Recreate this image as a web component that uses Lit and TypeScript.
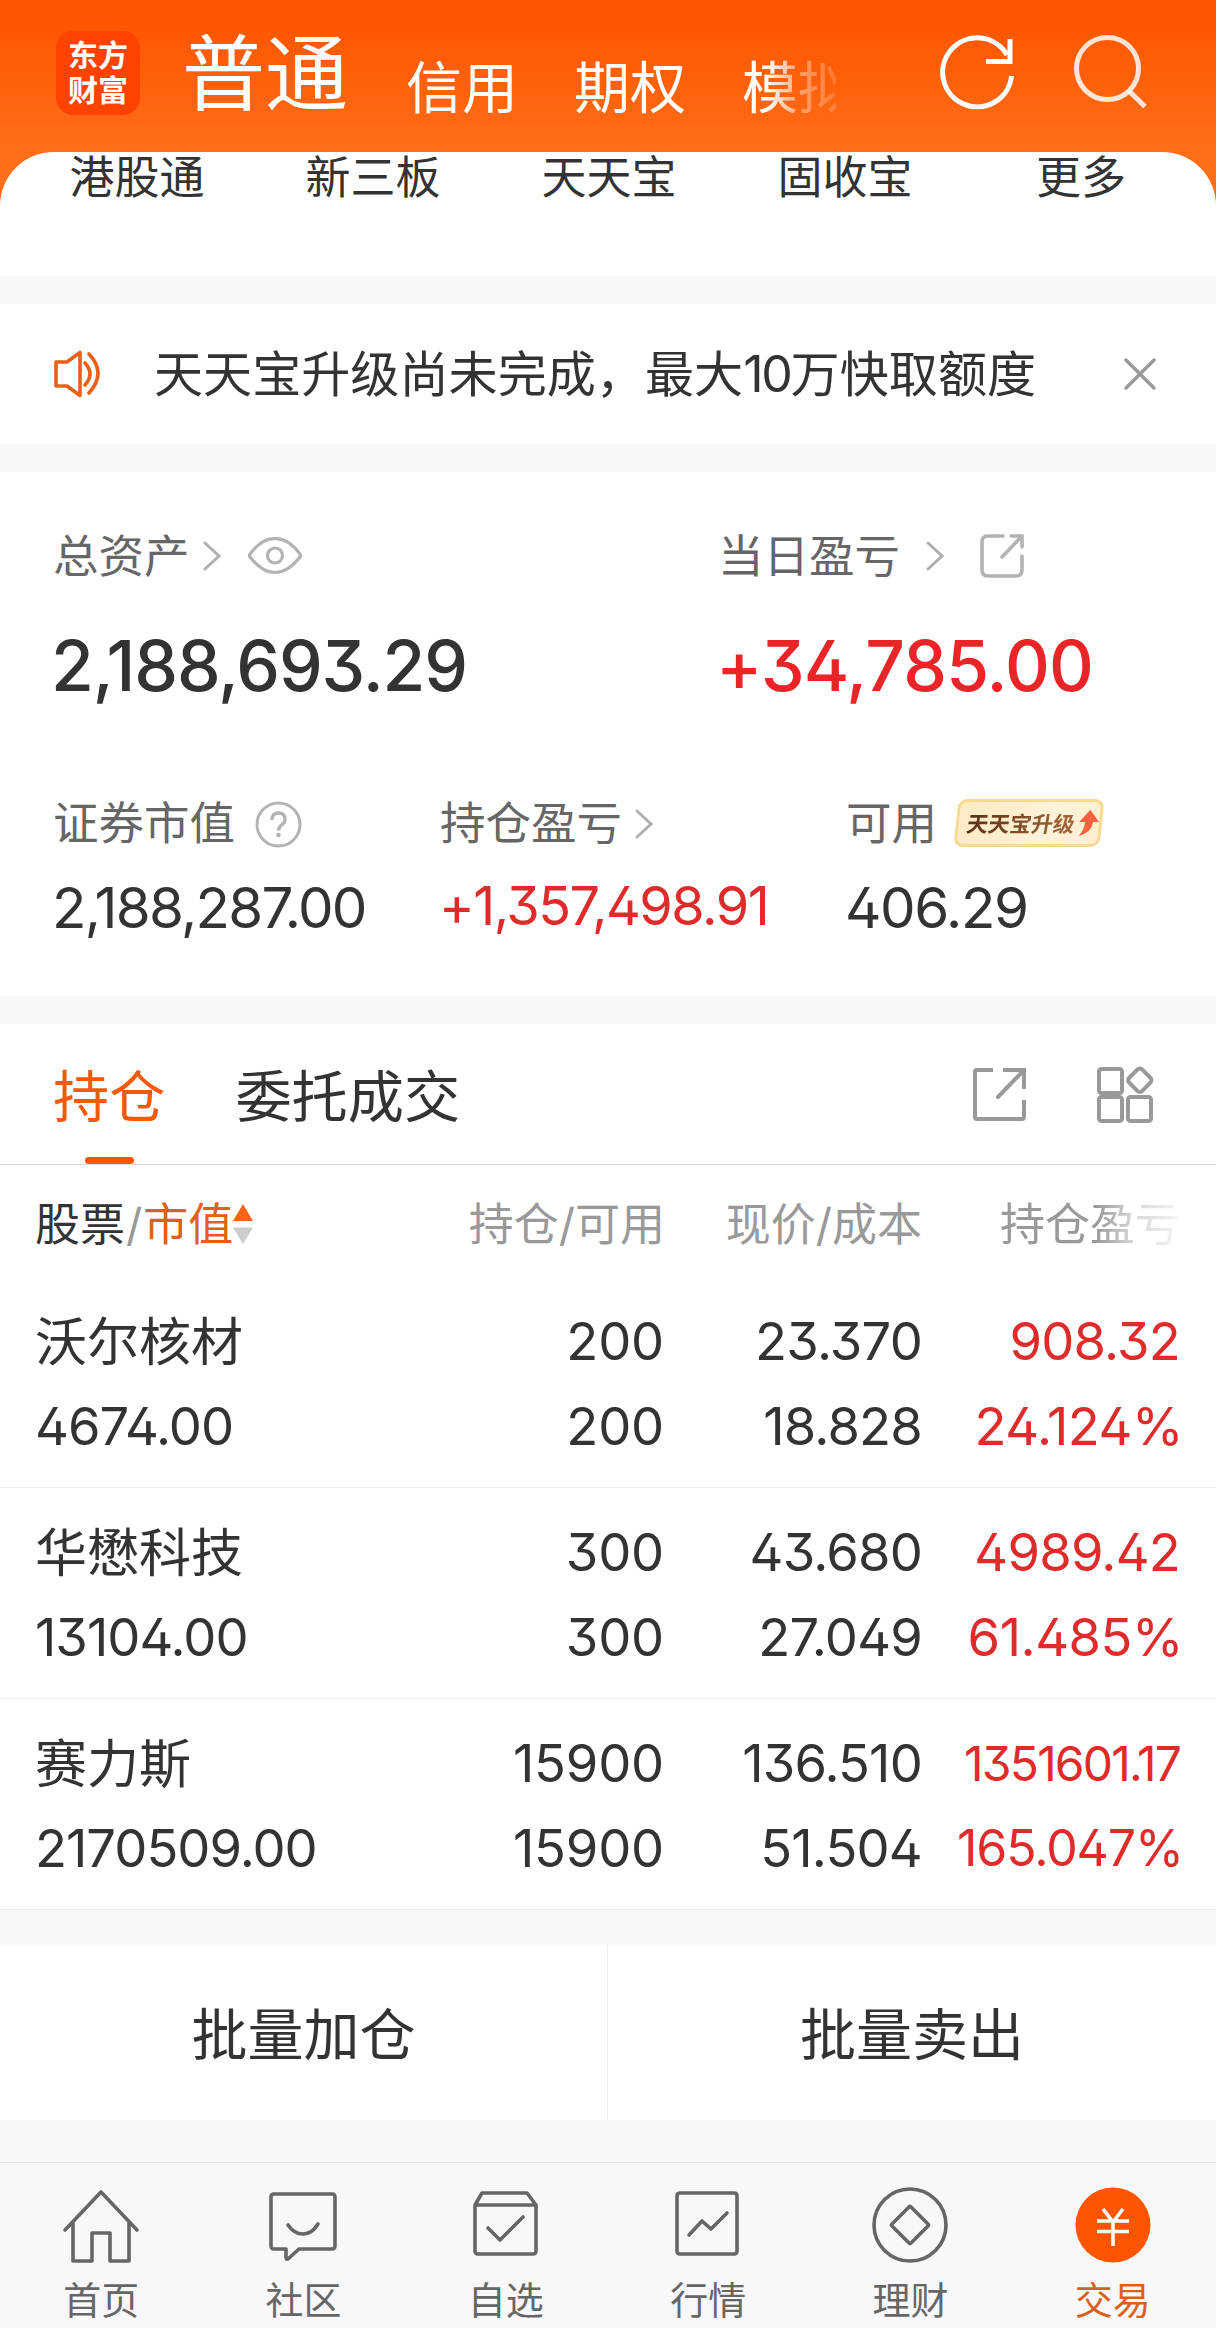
import { LitElement, html, css, svg } from "lit";
import { customElement } from "lit/decorators.js";
import { classMap } from "lit/directives/class-map.js";

interface Holding {
  name: string;
  value: string;
  held: string;
  available: string;
  price: string;
  cost: string;
  profit: string;
  rate: string;
  compact?: boolean;
}

const HOLDINGS: Holding[] = [
  { name: "沃尔核材", value: "4674.00", held: "200", available: "200", price: "23.370", cost: "18.828", profit: "908.32", rate: "24.124%" },
  { name: "华懋科技", value: "13104.00", held: "300", available: "300", price: "43.680", cost: "27.049", profit: "4989.42", rate: "61.485%" },
  { name: "赛力斯", value: "2170509.00", held: "15900", available: "15900", price: "136.510", cost: "51.504", profit: "1351601.17", rate: "165.047%", compact: true },
];

const chevron = html`<svg class="chevron" width="18" height="30" viewBox="0 0 18 30">
  <path d="M2 2 L16 15 L2 28" fill="none" stroke="#b0b0b0" stroke-width="3" stroke-linecap="round" />
</svg>`;

const NAV = [
  {
    label: "首页",
    icon: svg`<path d="M3 43 L39 5 L75 43 M11 36 V74 H30 V46 H48 V74 H67 V36" />`,
  },
  {
    label: "社区",
    icon: svg`<path d="M10 7 H68 Q71 7 71 10 V59 Q71 62 68 62 H35 L24 72 Q22 73 22 70 V62 H10 Q7 62 7 59 V10 Q7 7 10 7 Z M24 38 Q30 47 39 47 Q48 47 54 37" />`,
  },
  {
    label: "自选",
    icon: svg`<path d="M15 6 H60 L69 18 V64 Q69 67 66 67 H11 Q8 67 8 64 V18 Z M8 18 H69 M21 41 L33 53 L56 30" />`,
  },
  {
    label: "行情",
    icon: svg`<path d="M11 6 H65 Q68 6 68 9 V64 Q68 67 65 67 H11 Q8 67 8 64 V9 Q8 6 11 6 Z M20 48 L33 34 L42 42 L58 26" />`,
  },
  {
    label: "理财",
    icon: svg`<circle cx="39" cy="38" r="36" /><path d="M38 20 Q39 19 40 20 L57 37 Q58 38 57 39 L40 56 Q39 57 38 56 L21 39 Q20 38 21 37 Z" />`,
  },
  {
    label: "交易",
    active: true,
    icon: svg`<circle cx="39" cy="38" r="37.5" fill="#ff5500" stroke="none" /><path stroke="#fff" stroke-linecap="butt" d="M29 22 L39 35 L49 22 M23 34 H55 M23 44.5 H55 M39 34 V59" />`,
  },
];

@customElement("app-root")
export class AppRoot extends LitElement {
  static styles = css`
    :host {
      display: block;
      width: 1216px;
      height: 2328px;
      overflow: hidden;
      background: #f7f8fa;
      color: #333;
      font-family: "Inter", "Noto Sans CJK SC", sans-serif;
      font-feature-settings: "cv02", "cv09", "calt" 0;
      white-space: nowrap;
    }
    * { box-sizing: border-box; }
    svg { display: block; flex: none; }

    .top { background: linear-gradient(#ff5400 0, #ff5500 20px, #ff6e16 150px, #ff7018 206px); }
    .header { height: 152px; display: flex; align-items: flex-start; padding-left: 56px; color: #fff; }
    .logo {
      width: 84px; height: 84px; margin-top: 31px; border-radius: 17px; background: #ff4200;
      font: 700 30px/35px "Noto Sans CJK SC", sans-serif; text-align: center; padding-top: 5px; flex: none;
    }
    .accounts { display: flex; width: 654px; margin-left: 42px; line-height: 84px; font-size: 56px;
      -webkit-mask-image: linear-gradient(90deg, #000 585px, rgba(0,0,0,.4) 618px, rgba(0,0,0,.15) 654px);
      mask-image: linear-gradient(90deg, #000 585px, rgba(0,0,0,.4) 618px, rgba(0,0,0,.15) 654px);
      overflow: hidden; height: 152px; }
    .accounts .main { font-size: 83px; margin-top: 32px; width: 166px; margin-right: 58px; }
    .accounts .alt { margin-top: 46px; width: 112px; margin-right: 56px; flex: none; }
    .accounts .alt:last-child { margin-right: 0; }
    .refresh { margin: 34px 0 0 102px; }
    .search { margin: 34px 0 0 57px; }

    .sheet { height: 124px; background: #fff; border-radius: 54px 54px 0 0; padding: 1px 18px 0 19px; }
    .shortcuts { display: grid; grid-template-columns: repeat(5, 236px); font-size: 45px; line-height: 49px; text-align: center; }

    .notice { height: 140px; margin-top: 28px; background: #fff; display: flex; align-items: center; padding: 0 59px 0 53px; font-size: 49.1px; line-height: 60px; }
    .notice .msg { flex: 1; margin-left: 53px; }
    .notice .num { font-size: 50px; letter-spacing: -2.2px; }

    .assets { height: 524px; margin-top: 28px; background: #fff; padding: 59px 0 0 53px; }
    .primary { display: grid; grid-template-columns: 665px 1fr; }
    .primary .label svg { margin-bottom: 3px; }
    .secondary { display: grid; grid-template-columns: 387px 406px 1fr; margin-top: 92px; }
    .label { display: flex; align-items: center; height: 52px; font-size: 45.5px; line-height: 52px; color: #666; }
    .label .chevron { margin-left: 13px; }
    .day .label .chevron { margin-left: 26px; }
    .eye { margin-left: 27px; }
    .share-sm { margin-left: 35px; }
    .help { margin-left: 20px; }
    .big { font-size: 69.5px; font-weight: 500; line-height: 80px; margin: 43px 0 0 -2px; letter-spacing: -1.1px; }
    .day .big { letter-spacing: -0.8px; }
    .value { font-size: 56.5px; line-height: 64px; margin: 26px 0 0 -1px; letter-spacing: -1.7px; }
    .value.up { font-size: 54px; margin-top: 24px; letter-spacing: -1.5px; }
    .value.short { letter-spacing: -1.4px; }
    .red { color: #e02b2b; }
    .big.red { color: #eb2427; }
    .badge {
      display: flex; align-items: center; height: 48px; width: 146px; margin-left: 19px; padding-left: 8px; margin-bottom: 2px;
      border: 3px solid #f8d990; border-radius: 9px; transform: skewX(-6deg);
      background: linear-gradient(100deg, #ffebc4, #ffefd0 45%, #fff3dc 60%, #ffefcf);
    }
    .badge-text {
      font: 700 21.6px/30px "Noto Sans CJK SC", sans-serif; transform: skewX(-4deg);
      background: linear-gradient(90deg, #5c3015, #a5683a); -webkit-background-clip: text; background-clip: text; color: transparent;
    }
    .badge svg { margin-left: 4px; }

    .positions { margin-top: 28px; background: #fff; }
    .tabs { height: 141px; display: flex; align-items: stretch; padding: 0 61px 0 53px; border-bottom: 1px solid #dcdcdc; font-size: 56.2px; line-height: 147px; }
    .tab { display: flex; flex-direction: column; align-items: center; height: 140px; margin-right: 70px; }
    .tab.on { color: #f55a0c; }
    .tab .name { height: 133px; }
    .bar { width: 49px; height: 7px; border-radius: 4px; background: #ff5500; }
    .tools { margin-left: auto; display: flex; align-items: center; gap: 68px; }

    .row { display: grid; grid-template-columns: 1fr 300px 257px 258px; padding: 0 36px 0 35px; }
    .thead { height: 112px; padding-top: 27px; font-size: 45px; line-height: 65px; color: #999; }
    .thead .right { text-align: right; }
    .thead .first { display: flex; color: #333; }
    .thead .slash { color: #999; padding: 0 1px; }
    .thead .sort { color: #e06018; }
    .arrows { margin: 11px 0 0 0; }
    .fade { -webkit-mask-image: linear-gradient(90deg, #000 175px, rgba(0,0,0,.4) 210px, rgba(0,0,0,.1)); mask-image: linear-gradient(90deg, #000 175px, rgba(0,0,0,.4) 210px, rgba(0,0,0,.1)); }
    .item { height: 211px; padding-top: 22px; border-bottom: 1px solid #ececec; font-size: 52.5px; line-height: 85px; letter-spacing: -1px; }
    .item .name { font-size: 52px; letter-spacing: 0; height: 85px; line-height: 88px; }
    .num { text-align: right; letter-spacing: -0.8px; }
    .held { letter-spacing: -0.2px; padding-right: 1px; }
    .rate { margin-right: -3px; letter-spacing: -0.5px; }
    .compact { font-size: 48px; letter-spacing: -1.8px; }
    .compact-rate { font-size: 50px; letter-spacing: -1.1px; }

    .actions { height: 175px; margin-top: 35px; display: grid; grid-template-columns: 1fr 1fr; background: #fff; font-size: 56px; line-height: 180px; text-align: center; }
    .actions div { height: 175px; }
    .actions div:first-child { border-right: 1px solid #eee; }

    .nav { margin-top: 42px; height: 166px; border-top: 1px solid #e2e3e5; background: #f8f8fb; display: grid; grid-template-columns: repeat(6, 1fr); padding-right: 2px; color: #666; font-size: 38px; }
    .nav-item { display: flex; flex-direction: column; align-items: center; padding-top: 24px; line-height: 54px; }
    .nav-item.on { color: #d8601c; }
    .nav-item svg { fill: none; stroke: #666; stroke-width: 3.6; stroke-linecap: round; stroke-linejoin: round; margin-bottom: 8px; }
  `;

  private holding(h: Holding) {
    return html`<div class="row item">
      <div><div class="name">${h.name}</div><div>${h.value}</div></div>
      <div class="num held"><div>${h.held}</div><div>${h.available}</div></div>
      <div class="num"><div>${h.price}</div><div>${h.cost}</div></div>
      <div class="num red">
        <div class=${classMap({ compact: !!h.compact })}>${h.profit}</div>
        <div class=${classMap({ rate: true, "compact-rate": !!h.compact })}>${h.rate}</div>
      </div>
    </div>`;
  }

  render() {
    return html`
      <div class="top">
        <div class="header">
          <div class="logo">东方<br />财富</div>
          <div class="accounts">
            <div class="main">普通</div>
            <div class="alt">信用</div>
            <div class="alt">期权</div>
            <div class="alt">模拟</div>
          </div>
          <svg class="refresh" width="78" height="78" viewBox="0 0 78 78" fill="none" stroke="#fff" stroke-width="5">
            <path d="M73.500 42 A34.500 34.500 0 1 1 69 21" />
            <path d="M72 5 V27.500 H48" />
          </svg>
          <svg class="search" width="78" height="78" viewBox="0 0 78 78" fill="none" stroke="#fff" stroke-opacity=".84" stroke-width="5">
            <circle cx="34.500" cy="34.500" r="31" />
            <path d="M56 57 L72 72.500" />
          </svg>
        </div>
        <div class="sheet">
          <div class="shortcuts">${["港股通", "新三板", "天天宝", "固收宝", "更多"].map((t) => html`<div>${t}</div>`)}</div>
        </div>
      </div>

      <div class="notice">
        <svg width="48" height="48" viewBox="0 0 48 48" fill="none" stroke="#e8601a" stroke-width="3.600" stroke-linejoin="round" stroke-linecap="round">
          <path d="M3 12 H14 L27 2.500 V45.500 L14 36 H3 Z M32 13 Q42 24 32 35 M36 4 Q54 23 36 43" />
        </svg>
        <div class="msg">天天宝升级尚未完成，最大<span class="num">10</span>万快取额度</div>
        <svg width="34" height="34" viewBox="0 0 34 34" stroke="#999" stroke-width="3.500" stroke-linecap="round">
          <path d="M3 3 L31 31 M31 3 L3 31" />
        </svg>
      </div>

      <div class="assets">
        <div class="primary">
          <div>
            <div class="label">总资产${chevron}
              <svg class="eye" width="54" height="38" viewBox="0 0 54 38" fill="none" stroke="#b3b3b3" stroke-width="3.200">
                <path d="M2 17 Q14 1 27 1.700 Q40 1 52 17 Q53 19 52 20 Q40 35.500 27 35.500 Q14 35.500 2 20 Q1 18.500 2 17 Z" /><circle cx="27" cy="18.500" r="7.500" />
              </svg>
            </div>
            <div class="big">2,188,693.29</div>
          </div>
          <div class="day">
            <div class="label">当日盈亏${chevron}
              <svg class="share-sm" width="46" height="46" viewBox="0 0 46 46" fill="none" stroke="#b3b3b3" stroke-width="3.600" stroke-linecap="round">
                <path d="M24 3 H9 Q3 3 3 9 V37 Q3 43 9 43 H37 Q43 43 43 37 V23 M32 3 H43 V14 M42 4 L23 24" />
              </svg>
            </div>
            <div class="big red">+34,785.00</div>
          </div>
        </div>
        <div class="secondary">
          <div>
            <div class="label">证券市值
              <svg class="help" width="47" height="47" viewBox="0 0 47 47" fill="none" stroke="#b3b3b3" stroke-width="3">
                <circle cx="23.500" cy="23.500" r="21.500" /><path d="M17 19 Q17 12 23.500 12 Q30 12 30 18.500 Q30 21.500 26.500 24 Q23.500 26.500 23.500 29.500" stroke-width="3.400" /><circle cx="23.500" cy="34" r="2.300" fill="#b3b3b3" stroke="none" />
              </svg>
            </div>
            <div class="value">2,188,287.00</div>
          </div>
          <div>
            <div class="label">持仓盈亏${chevron}</div>
            <div class="value up red">+1,357,498.91</div>
          </div>
          <div>
            <div class="label">可用
              <div class="badge">
                <span class="badge-text">天天宝升级</span>
                <svg width="20" height="26" viewBox="0 0 20 26"><path d="M10 0 L20 12 H14 Q14 22 1 26 Q6 20 6 12 H0 Z" fill="#f9623e" /></svg>
              </div>
            </div>
            <div class="value short">406.29</div>
          </div>
        </div>
      </div>

      <div class="positions">
        <div class="tabs">
          <div class="tab on"><div class="name">持仓</div><div class="bar"></div></div>
          <div class="tab"><div class="name">委托成交</div></div>
          <div class="tools">
            <svg width="56" height="56" viewBox="0 0 56 56" fill="none" stroke="#999" stroke-width="4">
              <path d="M22 4 H6 Q4 4 4 6 V51 Q4 53 6 53 H51 Q53 53 53 51 V34 M32 4 H53 V23" /><path d="M52 5 L27 31" stroke-linecap="round" />
            </svg>
            <svg width="60" height="58" viewBox="0 0 60 58" fill="none" stroke="#999" stroke-width="4">
              <rect x="4" y="4" width="23" height="24" rx="2.500" /><rect x="4" y="32" width="23" height="24" rx="2.500" /><rect x="33" y="32" width="23" height="24" rx="2.500" />
              <rect x="35.500" y="6" width="18.500" height="18.500" rx="3.500" transform="rotate(45 44.800 15.300)" />
            </svg>
          </div>
        </div>
        <div class="row thead">
          <div class="first">股票<span class="slash">/</span><span class="sort">市值</span>
            <svg class="arrows" width="20" height="42" viewBox="0 0 20 42"><path d="M10 1 L20 18 H0 Z" fill="#f5641a" /><path d="M0 24.500 H20 L10 41 Z" fill="#ccc" /></svg>
          </div>
          <div class="right">持仓/可用</div>
          <div class="right">现价/成本</div>
          <div class="right fade">持仓盈亏</div>
        </div>
        ${HOLDINGS.map((h) => this.holding(h))}
      </div>

      <div class="actions"><div>批量加仓</div><div>批量卖出</div></div>

      <div class="nav">
        ${NAV.map((n) => html`<div class=${classMap({ "nav-item": true, on: !!n.active })}>
          <svg width="78" height="78" viewBox="0 0 78 78">${n.icon}</svg>
          <div>${n.label}</div>
        </div>`)}
      </div>
    `;
  }
}
